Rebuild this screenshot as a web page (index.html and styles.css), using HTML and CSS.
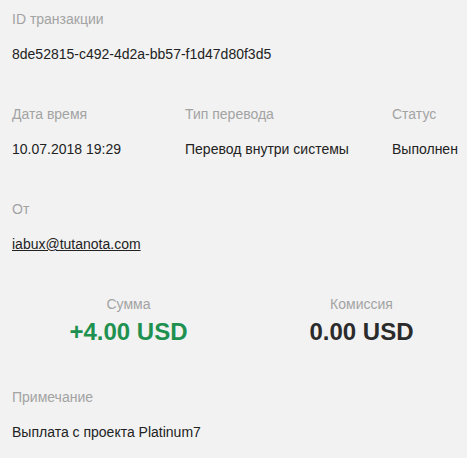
FILE: index.html
```html
<!DOCTYPE html>
<html lang="ru">
<head>
<meta charset="utf-8">
<link rel="stylesheet" href="styles.css">
</head>
<body>
<div class="details">
  <section class="field">
    <div class="label">ID транзакции</div>
    <div class="value">8de52815-c492-4d2a-bb57-f1d47d80f3d5</div>
  </section>
  <section class="row3">
    <div class="field">
      <div class="label">Дата время</div>
      <div class="value">10.07.2018 19:29</div>
    </div>
    <div class="field">
      <div class="label">Тип перевода</div>
      <div class="value">Перевод внутри системы</div>
    </div>
    <div class="field">
      <div class="label">Статус</div>
      <div class="value">Выполнен</div>
    </div>
  </section>
  <section class="field">
    <div class="label">От</div>
    <div class="value"><a class="link" href="#">iabux@tutanota.com</a></div>
  </section>
  <section class="amounts">
    <div class="amount-col">
      <div class="label">Сумма</div>
      <div class="amount positive">+4.00 USD</div>
    </div>
    <div class="amount-col">
      <div class="label">Комиссия</div>
      <div class="amount">0.00 USD</div>
    </div>
  </section>
  <section class="field">
    <div class="label">Примечание</div>
    <div class="value">Выплата с проекта Platinum7</div>
  </section>
</div>
</body>
</html>
```
FILE: styles.css
```css
html, body {
  margin: 0;
  padding: 0;
  background: #f2f2f2;
  overflow: hidden;
}
body {
  font-family: Arial, "Liberation Sans", sans-serif;
  font-size: 14px;
  line-height: 20px;
  color: #222;
}
.details {
  padding: 9px 0 0 12px;
  display: flex;
  flex-direction: column;
  gap: 40px;
}
.field {
  display: flex;
  flex-direction: column;
  gap: 15px;
}
.label {
  color: #a3a3a3;
}
.value {
  color: #222;
  white-space: nowrap;
}
.link {
  color: #222;
  text-decoration: underline;
}
.row3 {
  display: grid;
  grid-template-columns: 173px 207px auto;
}
.amounts {
  display: grid;
  grid-template-columns: 233px 233px;
}
.amount-col {
  display: flex;
  flex-direction: column;
  align-items: center;
  gap: 3px;
}
.amount {
  font-size: 24px;
  line-height: 30px;
  font-weight: bold;
  color: #2b2b2b;
  white-space: nowrap;
}
.amount.positive {
  color: #1e9150;
}
```
